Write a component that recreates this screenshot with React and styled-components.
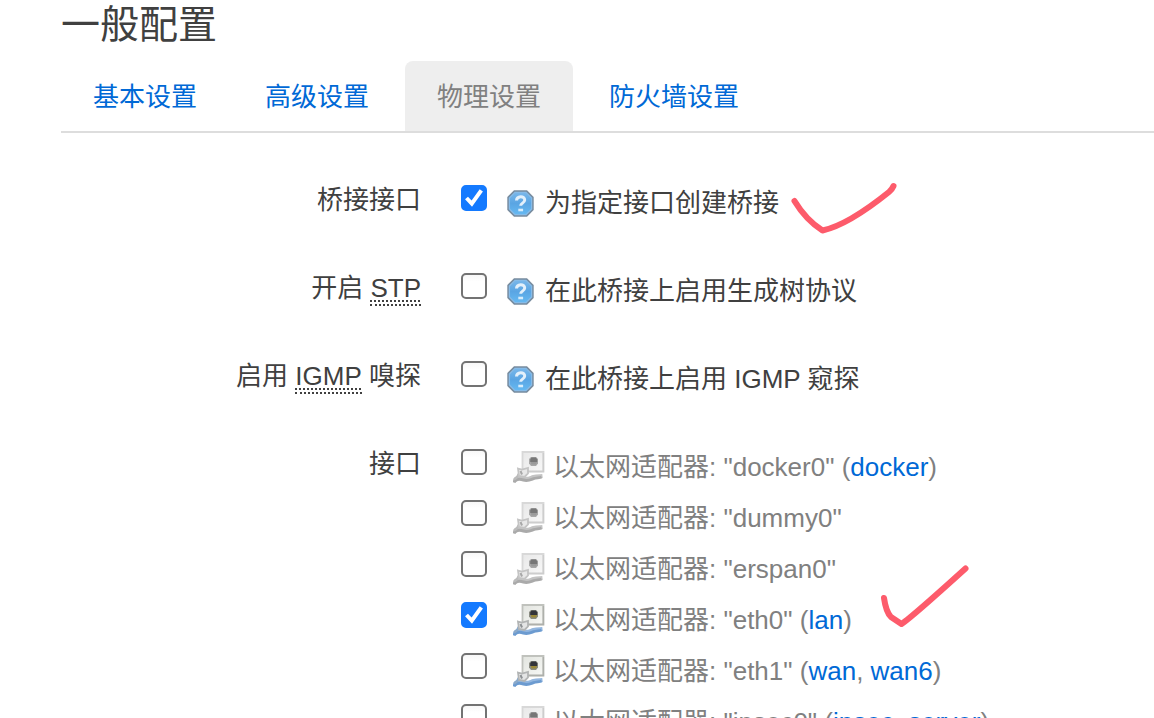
import React, { useId } from "react";
import styled, { createGlobalStyle } from "styled-components";

const GlobalStyle = createGlobalStyle`
  * { box-sizing: border-box; }
  body {
    margin: 0;
    background: #fff;
    color: #404040;
    font: 26px/36px "Liberation Sans", "Noto Sans CJK SC", sans-serif;
    overflow: hidden;
  }
`;

const Page = styled.main`
  padding-left: 61px;
  min-height: 100vh;
`;

const Title = styled.h1`
  margin: 0;
  font-size: 39px;
  line-height: 50px;
  font-weight: 400;
`;

const Tabs = styled.nav`
  display: flex;
  gap: 4px;
  margin-top: 11px;
  border-bottom: 2px solid #ddd;
`;

const Tab = styled.a`
  height: 70px;
  padding: 0 32px;
  line-height: 72px;
  border-radius: 8px 8px 0 0;
  text-decoration: none;
  white-space: nowrap;
  color: ${(p) => (p.$active ? "#808080" : "#0069d6")};
  background: ${(p) => (p.$active ? "#eee" : "transparent")};
`;

const Form = styled.form`
  display: flex;
  flex-direction: column;
  gap: 48px;
  padding-top: 48px;
`;

const Field = styled.div`
  display: grid;
  grid-template-columns: 360px 1fr;
  column-gap: 40px;
`;

const FieldLabel = styled.label`
  text-align: right;
  white-space: nowrap;
  line-height: 38px;
`;

const Abbr = styled.abbr`
  display: inline-block;
  line-height: 32px;
  text-decoration: underline dotted 2px;
  text-underline-offset: 3px;
  text-decoration-skip-ink: none;
  border-bottom: 2px dotted #404040;
`;

const Choice = styled.div`
  display: flex;
  height: 40px;
  padding-top: 4px;
`;

const CheckWrap = styled.span`
  position: relative;
  flex: none;
  width: 26px;
  height: 26px;
  margin-right: ${(p) => p.$gap}px;

  svg {
    position: absolute;
    inset: 0;
    pointer-events: none;
    display: none;
  }
  input:checked + svg { display: block; }
`;

const CheckInput = styled.input`
  appearance: none;
  display: block;
  width: 26px;
  height: 26px;
  margin: 0;
  border: 2px solid #737373;
  border-radius: 5px;
  background: linear-gradient(#f8f8f8, #fff 30%);
  &:checked {
    border-color: #147aff;
    background: #147aff;
  }
`;

const Hint = styled.span`
  display: flex;
  gap: 11px;
  height: 36px;
  white-space: nowrap;

  svg { margin-top: 5px; flex: none; }
`;

const DeviceList = styled.ul`
  list-style: none;
  margin: 0;
  padding: 0;
`;

const Device = styled.li`
  display: flex;
  height: 51px;
  padding-top: 4px;
`;

const DeviceLabel = styled.label`
  display: flex;
  gap: 8px;
  height: 36px;
  color: #808080;
  white-space: nowrap;

  svg { flex: none; margin-top: 1px; }
`;

const NetLink = styled.a`
  color: #0069d6;
  text-decoration: none;
`;

const PenMark = styled.svg`
  position: absolute;
  left: ${(p) => p.$x}px;
  top: ${(p) => p.$y}px;
  fill: none;
  stroke: #fd5b6b;
  stroke-width: 6;
  stroke-linecap: round;
  stroke-linejoin: round;
  pointer-events: none;
`;

function Checkbox({ id, checked, gap }) {
  return (
    <CheckWrap $gap={gap}>
      <CheckInput type="checkbox" id={id} defaultChecked={checked} />
      <svg width="26" height="26" viewBox="0 0 26 26" fill="none" stroke="#fff" strokeWidth="4">
        <path d="M5.5 13 10.8 18.600 20.300 5.300" />
      </svg>
    </CheckWrap>
  );
}

function HelpIcon() {
  const id = useId();
  return (
    <svg width="27" height="27" viewBox="0 0 27 27" aria-hidden="true">
      <defs>
        <linearGradient id={id} x1="0" y1="0" x2="0" y2="1">
          <stop offset="0" stopColor="#79b7ea" />
          <stop offset="0.5" stopColor="#5aa5e3" />
          <stop offset="1" stopColor="#65b9f2" />
        </linearGradient>
      </defs>
      <path d="M7 .3h13l6.700 6.700v13L20 26.700H7L.3 20V7z" fill="#778b9e" />
      <path d="M8 2.400h11l5.600 5.600v11L19 24.600H8L2.400 19V8z" fill={`url(#${id})`} stroke="#86bbe8" strokeWidth="1.300" />
      <path d="M9.500 10.500c.2-5 8.300-5 8.200-.5-.1 3.200-4 3-4 5.700" fill="none" stroke="#e3f0fb" strokeWidth="3" />
      <path d="M11.300 20h4.800" stroke="#d8edfc" strokeWidth="2.600" />
    </svg>
  );
}

function EthernetIcon({ up }) {
  const id = useId();
  return (
    <svg width="32" height="34" viewBox="0 0 32 34" aria-hidden="true">
      <defs>
        <linearGradient id={id} x1="0" y1="0" x2="1" y2="1">
          <stop offset="0" stopColor={up ? "#e2e4df" : "#e8e8e8"} />
          <stop offset="1" stopColor={up ? "#f7f8f5" : "#f8f8f8"} />
        </linearGradient>
      </defs>
      <path d="M9.500 2h21v19.500h-21z" fill={`url(#${id})`} stroke={up ? "#c0c2bd" : "#d8d8d8"} strokeWidth="1.800" />
      <path d="M30.300 3v18.500H13" stroke={up ? "#aeb0ab" : "#cdcdcd"} strokeWidth="1.500" fill="none" />
      <path d="M18 7h5l2 2v4.500L23 16h-5l-2-2.500V9z" fill={up ? "#8b8c82" : "#a8a8a8"} />
      <path d="M18.500 7.500h4.500l1.200 2v2.500h-7v-2.500z" fill={up ? "#33343a" : "#777"} />
      <path d="M17.800 12h6.200l-1 2.500h-4.500z" fill={up ? "#9b8938" : "#9a9a9a"} />
      <path
        d="M1.500 31.500c.5-4 5-4.300 9-3 4 1.200 6.500-.5 10-1.500 3.500-1 6.500-.7 9-1"
        fill="none"
        stroke={up ? "#94b7df" : "#c4c4c4"}
        strokeWidth="4"
      />
      <path
        d="M1 32.500c1-3.500 5.500-3.800 9.500-2.500 4 1.300 6.500 0 10-1.300 3-1 6-.7 8-1.700"
        fill="none"
        stroke={up ? "#6c9bd0" : "#aaa"}
        strokeWidth="3"
      />
      <path d="M1 29.500c2-1 4.200-3 5-6" stroke={up ? "#8ba9c9" : "#bbb"} strokeWidth="2.500" fill="none" />
      <path d="M5 18.500 9 19.500l6-1.500v5.500L11.500 27 6 26z" fill={up ? "#e4e5e5" : "#e8e8e8"} stroke={up ? "#b2b4b4" : "#c4c4c4"} strokeWidth="1.800" />
      <path d="m7.500 21 1.500 3.500" stroke={up ? "#8d9194" : "#a8a8a8"} strokeWidth="2" fill="none" />
    </svg>
  );
}

const options = [
  { id: "bridge", name: "桥接接口", checked: true, hint: "为指定接口创建桥接" },
  { id: "stp", name: <>开启 <Abbr>STP</Abbr></>, hint: "在此桥接上启用生成树协议" },
  { id: "igmp", name: <>启用 <Abbr>IGMP</Abbr> 嗅探</>, hint: "在此桥接上启用 IGMP 窥探" },
];

const devices = [
  { name: "docker0", nets: ["docker"] },
  { name: "dummy0", nets: [] },
  { name: "erspan0", nets: [] },
  { name: "eth0", nets: ["lan"], up: true, checked: true },
  { name: "eth1", nets: ["wan", "wan6"], up: true },
  { name: "ipsec0", nets: ["ipsec_server"] },
];

const tabs = ["基本设置", "高级设置", "物理设置", "防火墙设置"];

export default function App() {
  return (
    <Page>
      <GlobalStyle />
      <Title>一般配置</Title>
      <Tabs>
        {tabs.map((t, i) => (
          <Tab key={t} href="#" $active={i === 2}>{t}</Tab>
        ))}
      </Tabs>
      <Form>
        {options.map((o) => (
          <Field key={o.id}>
            <FieldLabel htmlFor={o.id}>{o.name}</FieldLabel>
            <Choice>
              <Checkbox id={o.id} checked={o.checked} gap={20} />
              <Hint><HelpIcon />{o.hint}</Hint>
            </Choice>
          </Field>
        ))}
        <Field>
          <FieldLabel as="span">接口</FieldLabel>
          <DeviceList aria-label="接口">
            {devices.map((d) => (
              <Device key={d.name}>
                <Checkbox id={d.name} checked={d.checked} gap={26} />
                <DeviceLabel htmlFor={d.name}>
                  <EthernetIcon up={d.up} />
                  <span>
                    以太网适配器: "{d.name}"
                    {d.nets.length > 0 && (
                      <>
                        {" ("}
                        {d.nets.map((n, i) => (
                          <React.Fragment key={n}>
                            {i > 0 && ", "}
                            <NetLink href="#">{n}</NetLink>
                          </React.Fragment>
                        ))}
                        )
                      </>
                    )}
                  </span>
                </DeviceLabel>
              </Device>
            ))}
          </DeviceList>
        </Field>
      </Form>
      <PenMark $x={786} $y={178} width="116" height="62" aria-hidden="true">
        <path d="M8.500 23Q20 42 36.500 52.500Q62 47 103 14Q106 11.500 107.500 8" />
      </PenMark>
      <PenMark $x={876} $y={560} width="100" height="74" aria-hidden="true">
        <path d="M8 38Q10 52 15 57Q18 59 25.500 64Q36 57 89.500 8.500" />
      </PenMark>
    </Page>
  );
}
